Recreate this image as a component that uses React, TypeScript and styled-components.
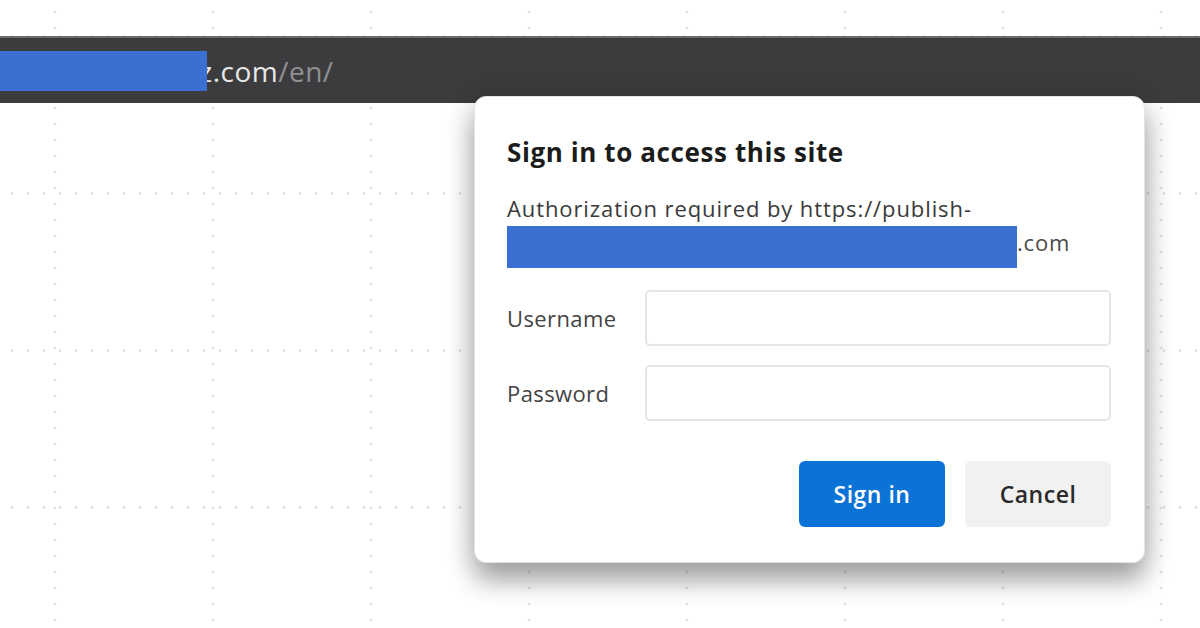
import styled, { createGlobalStyle } from "styled-components";

const GlobalStyle = createGlobalStyle`
  html, body {
    margin: 0;
    padding: 0;
    background: #ffffff;
  }
  body {
    font-family: "Open Sans", "Noto Sans", "Liberation Sans", sans-serif;
  }
`;

const Page = styled.div`
  position: relative;
  width: 1200px;
  height: 628px;
  overflow: hidden;
  display: flex;
  flex-direction: column;
  background-color: #ffffff;
  background-image:
    radial-gradient(circle, #e4e4e4 1.2px, transparent 1.8px),
    radial-gradient(circle, #e4e4e4 1.2px, transparent 1.8px);
  background-size: 158px 16px, 16px 157px;
  background-position: -24px 4px, 4px -42px;
`;

const TopStrip = styled.div`
  height: 36px;
  flex-shrink: 0;
`;

const AddressBar = styled.div`
  height: 67px;
  flex-shrink: 0;
  display: flex;
  align-items: center;
  background: #3c3c3f;
  border-top: 2px solid #6b6b6e;
  box-sizing: border-box;
`;

const Redacted = styled.div<{ $w: number; $h: number }>`
  position: relative;
  z-index: 1;
  width: ${(p) => p.$w}px;
  height: ${(p) => p.$h}px;
  background: #3b6fd2;
  flex-shrink: 0;
`;

const Url = styled.div`
  margin-left: -8px;
  font-size: 28px;
  letter-spacing: 0.5px;
  color: #e8e8e8;
  white-space: nowrap;
`;

const UrlDim = styled.span`
  color: #909092;
`;

const Dialog = styled.div`
  position: absolute;
  left: 474px;
  top: 96px;
  width: 671px;
  height: 467px;
  box-sizing: border-box;
  padding: 38px 33px 0 32px;
  background: #ffffff;
  border-radius: 12px;
  border: 1px solid #e4e4e4;
  box-shadow: 0 18px 26px rgba(0, 0, 0, 0.32), 0 2px 32px rgba(0, 0, 0, 0.14);
  display: flex;
  flex-direction: column;
`;

const Title = styled.div`
  font-size: 26px;
  font-weight: 700;
  color: #1c1c1c;
  letter-spacing: 0.6px;
  line-height: 34px;
  white-space: nowrap;
`;

const Message = styled.div`
  margin-top: 24px;
  font-size: 22px;
  color: #3a3a3a;
  letter-spacing: 0.9px;
  line-height: 30px;
  white-space: nowrap;
`;

const MessageRow = styled.div`
  display: flex;
  align-items: center;
  margin-top: 3px;
  font-size: 22px;
  color: #4a4a4a;
  letter-spacing: 0.8px;
`;

const Domain = styled.span`
  margin-bottom: 10px;
`;

const Form = styled.div`
  margin-top: 22px;
  display: grid;
  grid-template-columns: 138px 1fr;
  row-gap: 19px;
  align-items: center;
`;

const Label = styled.label`
  font-size: 22px;
  color: #444;
  letter-spacing: 0.4px;
`;

const Input = styled.div`
  height: 56px;
  box-sizing: border-box;
  border: 2px solid #e6e6e6;
  border-radius: 5px;
  background: #ffffff;
`;

const Actions = styled.div`
  margin-top: 40px;
  display: flex;
  justify-content: flex-end;
  gap: 20px;
`;

const Button = styled.div<{ $primary?: boolean }>`
  width: 146px;
  height: 66px;
  box-sizing: border-box;
  display: flex;
  align-items: center;
  justify-content: center;
  border-radius: 6px;
  font-size: 23px;
  font-weight: 600;
  letter-spacing: 0.5px;
  background: ${(p) => (p.$primary ? "#0b72d6" : "#f1f1f1")};
  color: ${(p) => (p.$primary ? "#ffffff" : "#2a2a2a")};
`;

export default function App() {
  return (
    <Page>
      <GlobalStyle />
      <TopStrip />
      <AddressBar>
        <Redacted $w={207} $h={40} />
        <Url>
          z.com<UrlDim>/en/</UrlDim>
        </Url>
      </AddressBar>

      <Dialog>
        <Title>Sign in to access this site</Title>
        <Message>Authorization required by https://publish-</Message>
        <MessageRow>
          <Redacted $w={510} $h={42} />
          <Domain>.com</Domain>
        </MessageRow>
        <Form>
          <Label>Username</Label>
          <Input />
          <Label>Password</Label>
          <Input />
        </Form>
        <Actions>
          <Button $primary>Sign in</Button>
          <Button>Cancel</Button>
        </Actions>
      </Dialog>
    </Page>
  );
}
